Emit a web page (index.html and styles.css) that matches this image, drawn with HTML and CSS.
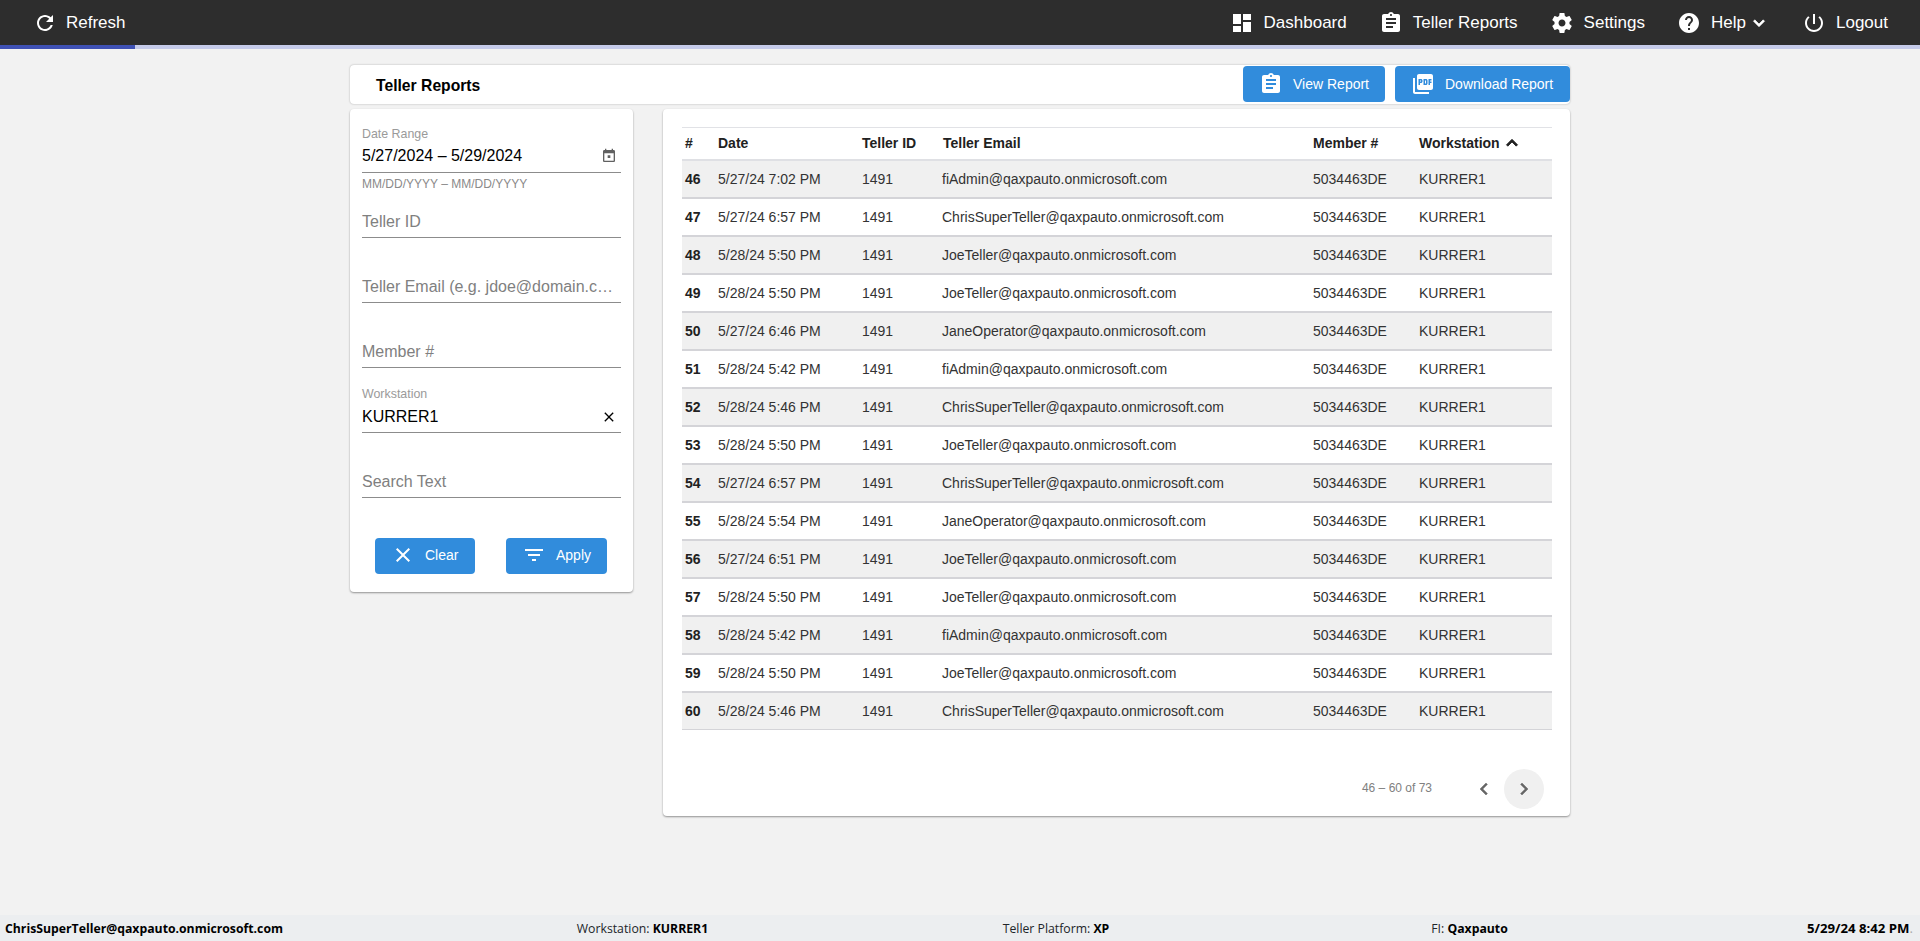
FILE: index.html
```html
<!DOCTYPE html>
<html lang="en">
<head>
<meta charset="utf-8">
<title>Teller Reports</title>
<link rel="stylesheet" href="styles.css">
</head>
<body>
<header class="topbar">
  <a class="nav-item refresh"><svg class="ico" viewBox="0 0 24 24"><path d="M17.65 6.35C16.2 4.9 14.21 4 12 4c-4.42 0-7.99 3.58-7.99 8s3.57 8 7.99 8c3.73 0 6.84-2.55 7.73-6h-2.08c-.82 2.33-3.04 4-5.65 4-3.31 0-6-2.69-6-6s2.69-6 6-6c1.66 0 3.14.69 4.22 1.78L13 11h7V4l-2.35 2.35z"/></svg>Refresh</a>
  <nav class="nav-right">
    <a class="nav-item"><svg class="ico" viewBox="0 0 24 24"><path d="M3 13h8V3H3v10zm0 8h8v-6H3v6zm10 0h8V11h-8v10zm0-18v6h8V3h-8z"/></svg>Dashboard</a>
    <a class="nav-item"><svg class="ico" viewBox="0 0 24 24"><path d="M19 3h-4.18C14.4 1.84 13.3 1 12 1c-1.3 0-2.4.84-2.82 2H5c-1.1 0-2 .9-2 2v14c0 1.1.9 2 2 2h14c1.1 0 2-.9 2-2V5c0-1.1-.9-2-2-2zm-7 0c.55 0 1 .45 1 1s-.45 1-1 1-1-.45-1-1 .45-1 1-1zm2 14H7v-2h7v2zm3-4H7v-2h10v2zm0-4H7V7h10v2z"/></svg>Teller Reports</a>
    <a class="nav-item"><svg class="ico" viewBox="0 0 24 24"><path d="M19.43 12.98c.04-.32.07-.64.07-.98s-.03-.66-.07-.98l2.11-1.65c.19-.15.24-.42.12-.64l-2-3.46c-.12-.22-.39-.3-.61-.22l-2.49 1c-.52-.4-1.08-.73-1.69-.98l-.38-2.65C14.46 2.18 14.25 2 14 2h-4c-.25 0-.46.18-.49.42l-.38 2.65c-.61.25-1.17.59-1.69.98l-2.49-1c-.23-.09-.49 0-.61.22l-2 3.46c-.13.22-.07.49.12.64l2.11 1.65c-.04.32-.07.65-.07.98s.03.66.07.98l-2.11 1.65c-.19.15-.24.42-.12.64l2 3.46c.12.22.39.3.61.22l2.49-1c.52.4 1.08.73 1.69.98l.38 2.65c.03.24.24.42.49.42h4c.25 0 .46-.18.49-.42l.38-2.65c.61-.25 1.17-.59 1.69-.98l2.49 1c.23.09.49 0 .61-.22l2-3.46c.12-.22.07-.49-.12-.64l-2.11-1.65zM12 15.5c-1.93 0-3.5-1.57-3.5-3.5s1.57-3.5 3.5-3.5 3.5 1.57 3.5 3.5-1.57 3.5-3.5 3.5z"/></svg>Settings</a>
    <a class="nav-item help"><svg class="ico" viewBox="0 0 24 24"><path d="M12 2C6.48 2 2 6.48 2 12s4.48 10 10 10 10-4.48 10-10S17.52 2 12 2zm1 17h-2v-2h2v2zm2.07-7.75l-.9.92C13.45 12.9 13 13.5 13 15h-2v-.5c0-1.1.45-2.1 1.17-2.83l1.24-1.26c.37-.36.59-.86.59-1.41 0-1.1-.9-2-2-2s-2 .9-2 2H8c0-2.21 1.79-4 4-4s4 1.79 4 4c0 .88-.36 1.68-.93 2.25z"/></svg>Help<svg class="caret" viewBox="0 0 24 24"><path d="M16.59 8.59L12 13.17 7.41 8.59 6 10l6 6 6-6z"/></svg></a>
    <a class="nav-item"><svg class="ico" viewBox="0 0 24 24"><path d="M13 3h-2v10h2V3zm4.83 2.17l-1.42 1.42C17.99 7.86 19 9.81 19 12c0 3.87-3.13 7-7 7s-7-3.13-7-7c0-2.19 1.01-4.14 2.58-5.42L6.17 5.17C4.23 6.82 3 9.26 3 12c0 4.97 4.03 9 9 9s9-4.03 9-9c0-2.74-1.23-5.18-3.17-6.83z"/></svg>Logout</a>
  </nav>
</header>
<div class="progress"><div class="progress-fill"></div></div>

<main class="page">
  <section class="title-card">
    <h1 class="title">Teller Reports</h1>
    <div class="title-actions">
      <button class="btn btn-view"><svg class="btn-ico" viewBox="0 0 24 24"><path d="M19 3h-4.18C14.4 1.84 13.3 1 12 1c-1.3 0-2.4.84-2.82 2H5c-1.1 0-2 .9-2 2v14c0 1.1.9 2 2 2h14c1.1 0 2-.9 2-2V5c0-1.1-.9-2-2-2zm-7 0c.55 0 1 .45 1 1s-.45 1-1 1-1-.45-1-1 .45-1 1-1zm2 14H7v-2h7v2zm3-4H7v-2h10v2zm0-4H7V7h10v2z"/></svg>View Report</button>
      <button class="btn btn-download"><svg class="btn-ico" viewBox="0 0 24 24"><path d="M20 2H8c-1.1 0-2 .9-2 2v12c0 1.1.9 2 2 2h12c1.1 0 2-.9 2-2V4c0-1.1-.9-2-2-2zm-8.5 7.5c0 .83-.67 1.5-1.5 1.5H9v2H7.5V7H10c.83 0 1.5.67 1.5 1.5v1zm5 2c0 .83-.67 1.5-1.5 1.5h-2.5V7H15c.83 0 1.5.67 1.5 1.5v3zm4-3H19v1h1.5V11H19v2h-1.5V7h3v1.5zM9 9.5h1v-1H9v1zM4 6H2v14c0 1.1.9 2 2 2h14v-2H4V6zm10 5.5h1v-3h-1v3z"/></svg>Download Report</button>
    </div>
  </section>

  <div class="columns">
    <aside class="card filters">
      <div class="field field-date">
        <label class="field-label">Date Range</label>
        <div class="field-row">
          <input class="field-input" value="5/27/2024 – 5/29/2024">
          <svg class="field-ico cal" viewBox="0 0 24 24"><path d="M19 3h-1V1h-2v2H8V1H6v2H5c-1.11 0-1.99.9-1.99 2L3 19c0 1.1.89 2 2 2h14c1.1 0 2-.9 2-2V5c0-1.1-.9-2-2-2zm0 16H5V8h14v11zM10 11h4v4h-4z"/></svg>
        </div>
      </div>
      <div class="helper">MM/DD/YYYY – MM/DD/YYYY</div>
      <div class="field"><div class="field-row"><input class="field-input" placeholder="Teller ID"></div></div>
      <div class="field"><div class="field-row"><input class="field-input" placeholder="Teller Email (e.g. jdoe@domain.com)"></div></div>
      <div class="field"><div class="field-row"><input class="field-input" placeholder="Member #"></div></div>
      <div class="field">
        <label class="field-label">Workstation</label>
        <div class="field-row">
          <input class="field-input" value="KURRER1">
          <svg class="field-ico clear" viewBox="0 0 24 24"><path d="M19 6.41L17.59 5 12 10.59 6.41 5 5 6.41 10.59 12 5 17.59 6.41 19 12 13.41 17.59 19 19 17.59 13.41 12z"/></svg>
        </div>
      </div>
      <div class="field"><div class="field-row"><input class="field-input" placeholder="Search Text"></div></div>
      <div class="filter-actions">
        <button class="btn btn-clear"><svg class="btn-ico" viewBox="0 0 24 24"><path d="M19 6.41L17.59 5 12 10.59 6.41 5 5 6.41 10.59 12 5 17.59 6.41 19 12 13.41 17.59 19 19 17.59 13.41 12z"/></svg>Clear</button>
        <button class="btn btn-apply"><svg class="btn-ico" viewBox="0 0 24 24"><path d="M10 18h4v-2h-4v2zM3 6v2h18V6H3zm3 7h12v-2H6v2z"/></svg>Apply</button>
      </div>
    </aside>

    <section class="card results">
      <table class="grid">
        <thead>
          <tr><th class="c-num">#</th><th class="c-date">Date</th><th class="c-id">Teller ID</th><th class="c-email">Teller Email</th><th class="c-member">Member #</th><th class="c-ws">Workstation<svg class="sort" viewBox="0 0 24 24"><path d="M12 8l-6 6 1.41 1.41L12 10.83l4.59 4.58L18 14z"/></svg></th></tr>
        </thead>
        <tbody>
          <tr><th>46</th><td>5/27/24 7:02 PM</td><td>1491</td><td class="email">fiAdmin@qaxpauto.onmicrosoft.com</td><td>5034463DE</td><td>KURRER1</td></tr>
          <tr><th>47</th><td>5/27/24 6:57 PM</td><td>1491</td><td class="email">ChrisSuperTeller@qaxpauto.onmicrosoft.com</td><td>5034463DE</td><td>KURRER1</td></tr>
          <tr><th>48</th><td>5/28/24 5:50 PM</td><td>1491</td><td class="email">JoeTeller@qaxpauto.onmicrosoft.com</td><td>5034463DE</td><td>KURRER1</td></tr>
          <tr><th>49</th><td>5/28/24 5:50 PM</td><td>1491</td><td class="email">JoeTeller@qaxpauto.onmicrosoft.com</td><td>5034463DE</td><td>KURRER1</td></tr>
          <tr><th>50</th><td>5/27/24 6:46 PM</td><td>1491</td><td class="email">JaneOperator@qaxpauto.onmicrosoft.com</td><td>5034463DE</td><td>KURRER1</td></tr>
          <tr><th>51</th><td>5/28/24 5:42 PM</td><td>1491</td><td class="email">fiAdmin@qaxpauto.onmicrosoft.com</td><td>5034463DE</td><td>KURRER1</td></tr>
          <tr><th>52</th><td>5/28/24 5:46 PM</td><td>1491</td><td class="email">ChrisSuperTeller@qaxpauto.onmicrosoft.com</td><td>5034463DE</td><td>KURRER1</td></tr>
          <tr><th>53</th><td>5/28/24 5:50 PM</td><td>1491</td><td class="email">JoeTeller@qaxpauto.onmicrosoft.com</td><td>5034463DE</td><td>KURRER1</td></tr>
          <tr><th>54</th><td>5/27/24 6:57 PM</td><td>1491</td><td class="email">ChrisSuperTeller@qaxpauto.onmicrosoft.com</td><td>5034463DE</td><td>KURRER1</td></tr>
          <tr><th>55</th><td>5/28/24 5:54 PM</td><td>1491</td><td class="email">JaneOperator@qaxpauto.onmicrosoft.com</td><td>5034463DE</td><td>KURRER1</td></tr>
          <tr><th>56</th><td>5/27/24 6:51 PM</td><td>1491</td><td class="email">JoeTeller@qaxpauto.onmicrosoft.com</td><td>5034463DE</td><td>KURRER1</td></tr>
          <tr><th>57</th><td>5/28/24 5:50 PM</td><td>1491</td><td class="email">JoeTeller@qaxpauto.onmicrosoft.com</td><td>5034463DE</td><td>KURRER1</td></tr>
          <tr><th>58</th><td>5/28/24 5:42 PM</td><td>1491</td><td class="email">fiAdmin@qaxpauto.onmicrosoft.com</td><td>5034463DE</td><td>KURRER1</td></tr>
          <tr><th>59</th><td>5/28/24 5:50 PM</td><td>1491</td><td class="email">JoeTeller@qaxpauto.onmicrosoft.com</td><td>5034463DE</td><td>KURRER1</td></tr>
          <tr><th>60</th><td>5/28/24 5:46 PM</td><td>1491</td><td class="email">ChrisSuperTeller@qaxpauto.onmicrosoft.com</td><td>5034463DE</td><td>KURRER1</td></tr>
        </tbody>
      </table>
      <div class="paginator">
        <span class="range">46 – 60 of 73</span>
        <button class="page-btn"><svg viewBox="0 0 24 24"><path d="M15.41 7.41L14 6l-6 6 6 6 1.41-1.41L10.83 12z"/></svg></button>
        <button class="page-btn page-next"><svg viewBox="0 0 24 24"><path d="M10 6L8.59 7.41 13.17 12l-4.58 4.58L10 18l6-6z"/></svg></button>
      </div>
    </section>
  </div>
</main>

<footer class="status">
  <b class="st-user">ChrisSuperTeller@qaxpauto.onmicrosoft.com</b>
  <span class="st-mid">Workstation: <b>KURRER1</b></span>
  <span class="st-mid">Teller Platform: <b>XP</b></span>
  <span class="st-mid">FI: <b>Qaxpauto</b></span>
  <span class="st-time"><b>5/29/24 8:42 PM</b><span class="st-dot">.</span></span>
</footer>
</body>
</html>
```

FILE: styles.css
```css
* { box-sizing: border-box; }
html, body { height: 100%; }
body {
  margin: 0;
  height: 941px;
  display: flex;
  flex-direction: column;
  overflow: hidden;
  background: #f2f2f2;
  color: #212121;
  font-family: "Liberation Sans", Arial, sans-serif;
}

/* top bar */
.topbar {
  height: 45px;
  flex: none;
  display: flex;
  align-items: center;
  justify-content: space-between;
  padding: 0 32px 0 33px;
  background: #2d2d2d;
  color: #fff;
}
.nav-right { display: flex; align-items: center; gap: 32px; }
.nav-item {
  display: flex;
  align-items: center;
  gap: 10px;
  font-size: 17px;
  white-space: nowrap;
}
.ico { width: 24px; height: 24px; fill: #fff; flex: none; }
.refresh { gap: 9px; }
.caret { width: 22px; height: 22px; fill: #fff; stroke: #fff; stroke-width: .8; margin-left: -8px; }
.progress { height: 4px; flex: none; background: #c5cae9; }
.progress-fill { width: 135px; height: 100%; background: #3f51b5; }

/* page */
.page {
  flex: 1;
  width: 1220px;
  margin: 0 auto;
  padding-top: 16px;
  display: flex;
  flex-direction: column;
  gap: 5px;
}
.title-card {
  height: 39px;
  display: flex;
  align-items: flex-start;
  justify-content: space-between;
  padding: 1px 0 0 26px;
  background: #fff;
  border-radius: 4px;
  box-shadow: 0 0 2px rgba(0,0,0,.3);
}
.title { margin: 0; font-size: 15.7px; line-height: 40px; font-weight: 700; color: #000; }
.title-actions { display: flex; gap: 10px; }
.btn {
  display: flex;
  align-items: center;
  height: 36px;
  padding: 0;
  border: 0;
  border-radius: 4px;
  background: #318cdc;
  color: #fff;
  font: 14px "Liberation Sans", Arial, sans-serif;
  white-space: nowrap;
}
.btn-ico { width: 24px; height: 24px; fill: #fff; flex: none; }
.btn-view { width: 142px; padding-left: 16px; gap: 10px; }
.btn-download { width: 175px; padding-left: 16px; gap: 10px; }
.columns { display: flex; gap: 30px; align-items: flex-start; }
.card {
  background: #fff;
  border-radius: 4px;
  box-shadow: 0 1px 2px rgba(0,0,0,.4);
}

/* filters */
.filters { width: 283px; padding: 14px 12px 18px; }
.field {
  height: 50px;
  margin-bottom: 15px;
  display: flex;
  flex-direction: column;
  justify-content: flex-end;
}
.field-date { margin-bottom: 0; }
.field-label { font-size: 12.4px; color: #9a9a9a; line-height: 14px; position: relative; top: 2px; }
.field-row {
  display: flex;
  align-items: center;
  height: 34px;
  padding-top: 3px;
  border-bottom: 1px solid #8c8c8c;
}
.field-date .field-row { padding-top: 1px; }
.field-input {
  flex: 1;
  min-width: 0;
  height: 100%;
  padding: 0;
  border: 0;
  outline: 0;
  background: transparent;
  color: #000;
  font: 16px "Liberation Sans", Arial, sans-serif;
  text-overflow: ellipsis;
}
.field-input::placeholder { color: #808080; opacity: 1; }
.field-ico { flex: none; }
.cal { width: 16px; height: 16px; fill: #616161; margin-right: 4px; }
.clear { width: 16px; height: 16px; fill: #000; margin-right: 4px; }
.helper { height: 15px; padding-top: 4px; font-size: 12px; line-height: 14px; color: #8a8a8a; }
.filter-actions {
  display: flex;
  justify-content: space-between;
  padding: 0 14px 0 13px;
  margin-top: 40px;
}
.btn-clear { width: 100px; padding: 0 0 2px 16px; gap: 10px; }
.btn-apply { width: 101px; padding: 0 0 2px 16px; gap: 10px; }

/* results */
.results { width: 907px; height: 707px; padding: 18px 18px 0 19px; }
.grid {
  width: 870px;
  table-layout: fixed;
  border-collapse: collapse;
  font-size: 14px;
  color: #333;
}
.grid thead tr { height: 32px; border-top: 1px solid #e1e2e6; border-bottom: 2px solid #dfe0e4; }
.grid thead th { text-align: left; font-weight: 700; color: #212121; padding: 0 0 0 3px; }
.c-num { width: 33px; }
.c-date { width: 144px; }
.c-id { width: 81px; }
.c-email { width: 370px; }
.c-member { width: 106px; }
.grid tbody tr { height: 38px; border-bottom: 2px solid #d4d4d8; }
.grid tbody tr:nth-child(odd) { background: #f0f0f0; }
.grid tbody tr:last-child { border-bottom: 1px solid #d4d4d8; }
.grid tbody th { text-align: left; font-weight: 700; color: #212121; padding: 0 0 0 3px; }
.grid td { padding: 0 0 0 3px; white-space: nowrap; }
.grid td.email { padding-left: 2px; }
.sort { width: 22px; height: 22px; fill: #212121; stroke: #212121; stroke-width: 1; vertical-align: -6px; margin-left: 1px; }
.paginator {
  display: flex;
  align-items: center;
  justify-content: flex-end;
  margin-top: 39px;
  padding-right: 8px;
}
.range { font-size: 12px; color: #808080; margin-right: 32px; position: relative; top: -1px; }
.page-btn {
  width: 40px;
  height: 40px;
  padding: 8px;
  border: 0;
  border-radius: 50%;
  background: transparent;
}
.page-btn svg { display: block; width: 24px; height: 24px; fill: #666; stroke: #666; stroke-width: .5; }
.page-next { background: #f0f0f0; }

/* footer */
.status {
  height: 26px;
  flex: none;
  display: grid;
  grid-template-columns: 431px 413px 414px 413px 1fr;
  align-items: center;
  padding: 0 5px;
  background: #eceef0;
  color: #212529;
  font-family: "Open Sans", sans-serif;
  font-size: 12.25px;
  white-space: nowrap;
}
.st-mid { text-align: center; }
.st-time { text-align: right; font-size: 13.2px; padding-right: 2px; }
.st-dot { color: #aaa; }
.status b { color: #000; }
```
